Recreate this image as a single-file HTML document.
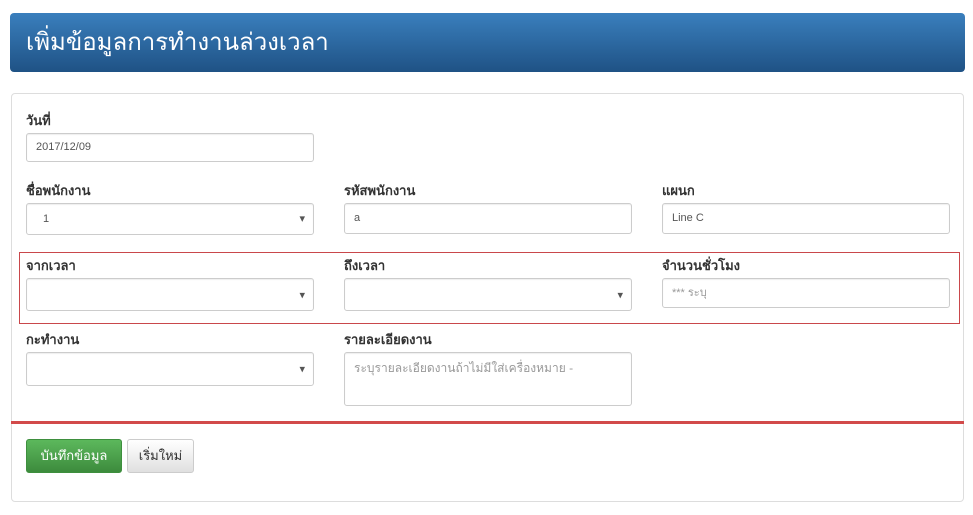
<!DOCTYPE html>
<html><head><meta charset="utf-8"><style>
body{margin:0;width:973px;height:515px;background:#fff;font-family:"Liberation Sans","Noto Sans CJK SC",sans-serif;position:relative;overflow:hidden}
.a{position:absolute}
.hd{left:10px;top:13px;width:955px;height:59px;border-radius:4px;background:linear-gradient(#3a7fbd,#1f5285);color:#fff;font-size:24px;line-height:59px;box-sizing:border-box;padding-left:16px}
.panel{left:11px;top:93px;width:953px;height:409px;border:1px solid #ddd;border-radius:4px;box-sizing:border-box}
.lb{font-size:13px;font-weight:bold;color:#333}
.in{border:1px solid #ccc;border-radius:3px;box-sizing:border-box;font-size:11px;color:#555;padding-left:9px;box-shadow:inset 0 1px 1px rgba(0,0,0,.07);background:#fff}
.sel::after{content:"▾";position:absolute;right:8px;top:50%;transform:translateY(-50%);font-size:11px;color:#555}
.ph{color:#999}
</style></head><body>
<div class="a hd">เพิ่มข้อมูลการทำงานล่วงเวลา</div>
<div class="a panel"></div>
<div class="a" style="left:19px;top:252px;width:941px;height:72px;border:1px solid #c9474b;box-sizing:border-box"></div>
<div class="a" style="left:11px;top:421px;width:953px;height:3px;background:#d24a4a"></div>

<div class="a lb" style="left:26px;top:110px">วันที่</div>
<div class="a in" style="left:26px;top:133px;width:288px;height:29px;line-height:27px">2017/12/09</div>

<div class="a lb" style="left:26px;top:180px">ชื่อพนักงาน</div>
<div class="a in sel" style="left:26px;top:203px;width:288px;height:32px;line-height:30px;padding-left:16px">1</div>
<div class="a lb" style="left:344px;top:180px">รหัสพนักงาน</div>
<div class="a in" style="left:344px;top:203px;width:288px;height:31px;line-height:29px">a</div>
<div class="a lb" style="left:662px;top:180px">แผนก</div>
<div class="a in" style="left:662px;top:203px;width:288px;height:31px;line-height:29px">Line C</div>

<div class="a lb" style="left:26px;top:255px">จากเวลา</div>
<div class="a in sel" style="left:26px;top:278px;width:288px;height:33px"></div>
<div class="a lb" style="left:344px;top:255px">ถึงเวลา</div>
<div class="a in sel" style="left:344px;top:278px;width:288px;height:33px"></div>
<div class="a lb" style="left:662px;top:255px">จำนวนชั่วโมง</div>
<div class="a in ph" style="left:662px;top:278px;width:288px;height:30px;line-height:28px">*** ระบุ</div>

<div class="a lb" style="left:26px;top:329px">กะทำงาน</div>
<div class="a in sel" style="left:26px;top:352px;width:288px;height:34px"></div>
<div class="a lb" style="left:344px;top:329px">รายละเอียดงาน</div>
<div class="a in ph" style="left:344px;top:352px;width:288px;height:54px;padding-top:6px;font-size:12px">ระบุรายละเอียดงานถ้าไม่มีใส่เครื่องหมาย -</div>

<div class="a" style="left:26px;top:439px;width:96px;height:34px;border-radius:3px;background:linear-gradient(#5cb85c,#3d8b3d);border:1px solid #3e8f3e;box-sizing:border-box;color:#fff;font-size:13px;line-height:32px;text-align:center">บันทึกข้อมูล</div>
<div class="a" style="left:127px;top:439px;width:67px;height:34px;border-radius:3px;background:linear-gradient(#fff,#e0e0e0);border:1px solid #ccc;box-sizing:border-box;color:#333;font-size:13px;line-height:32px;text-align:center">เริ่มใหม่</div>
</body></html>
